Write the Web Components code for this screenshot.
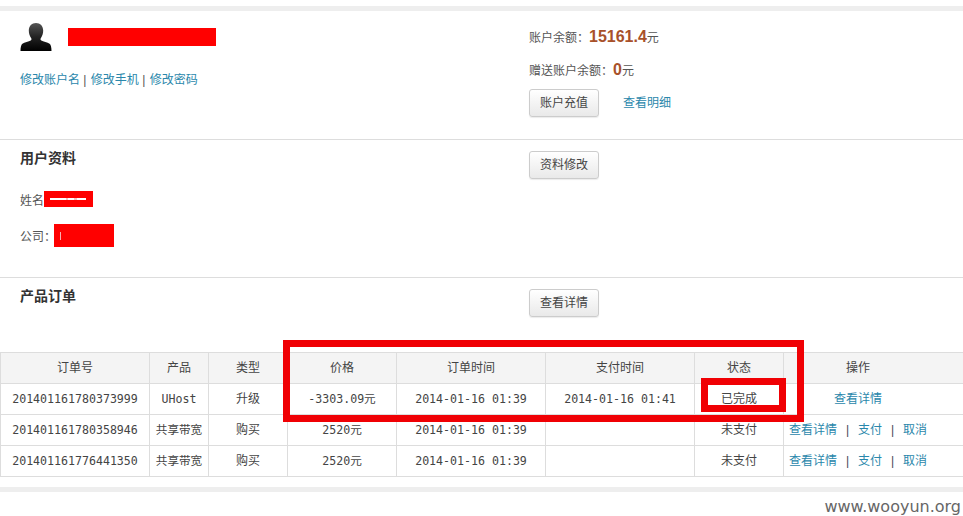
<!DOCTYPE html>
<html lang="zh">
<head>
<meta charset="utf-8">
<title>账户</title>
<style>
  html, body { margin: 0; padding: 0; background: #fff; }
  body {
    height: 516px;
    overflow: hidden;
    font: 12px/18px "Liberation Sans", "Noto Sans CJK SC", sans-serif;
    color: #444;
  }
</style>
</head>
<body>
<account-page></account-page>

<script>
const FONT = '"Liberation Sans", "Noto Sans CJK SC", sans-serif';
const LINK = '#2a87ab';

class RedactBar extends HTMLElement {
  connectedCallback() {
    this.attachShadow({ mode: 'open' });
    this.shadowRoot.innerHTML = `
      <style>
        :host { display: inline-block; background: #f00; vertical-align: top; position: relative; }
        .scratch { display: none; }
        :host([scratch]) .scratch {
          display: block;
          margin: 7px 7px 0 6px;
          height: 2px;
          background: linear-gradient(90deg, #fff 0 45%, #f9c0c0 45% 50%, #fff 50% 68%, #f9c0c0 68% 74%, #fff 74%);
        }
        :host([tick]) .tick {
          display: block;
          margin: 8px 0 0 6px;
          width: 1px;
          height: 8px;
          background: #f7b0b0;
        }
        .tick { display: none; }
      </style>
      <div class="scratch"></div><div class="tick"></div>
    `;
  }
}

class PlainButton extends HTMLElement {
  connectedCallback() {
    this.attachShadow({ mode: 'open' });
    this.shadowRoot.innerHTML = `
      <style>
        :host {
          display: block;
          box-sizing: border-box;
          width: 70px;
          height: 28px;
          border: 1px solid #ccc;
          border-radius: 3px;
          background: linear-gradient(#fff, #e9e9e9);
          box-shadow: 0 1px 1px rgba(0,0,0,0.08);
          color: #444;
          text-align: center;
          font: 12px/26px ${FONT};
        }
      </style>
      <slot></slot>
    `;
  }
}

class UserAvatar extends HTMLElement {
  connectedCallback() {
    this.attachShadow({ mode: 'open' });
    this.shadowRoot.innerHTML = `
      <style>
        :host { display: block; width: 32px; height: 30px; }
        svg { display: block; }
      </style>
      <svg width="32" height="30" viewBox="0 0 32 30">
        <defs>
          <linearGradient id="g" x1="0" y1="0" x2="0" y2="1">
            <stop offset="0" stop-color="#555"/>
            <stop offset="0.5" stop-color="#222"/>
            <stop offset="1" stop-color="#000"/>
          </linearGradient>
        </defs>
        <path fill="url(#g)" d="M16 1c4.300 0 7.200 3 7.200 7.500 0 3-1 5.800-2.400 7.700-.5.700-.4 1.700.5 2.200 1.800 1 6.300 1.800 8.300 3.400 1.300 1.100 1.900 3.600 1.900 7.200H.5c0-3.600.6-6.100 1.900-7.200 2-1.600 6.500-2.400 8.300-3.400.9-.5 1-1.500.5-2.200C9.800 14.300 8.800 11.500 8.800 8.500 8.800 4 11.700 1 16 1z"/>
      </svg>
    `;
  }
}

class RedFrame extends HTMLElement {
  connectedCallback() {
    this.attachShadow({ mode: 'open' });
    this.shadowRoot.innerHTML = `
      <style>
        :host {
          position: absolute;
          box-sizing: border-box;
          border: 7px solid #f00004;
          pointer-events: none;
        }
      </style>
    `;
  }
}

class AccountSummary extends HTMLElement {
  connectedCallback() {
    this.attachShadow({ mode: 'open' });
    this.shadowRoot.innerHTML = `
      <style>
        :host {
          display: grid;
          grid-template-columns: 529px 1fr;
          height: 128px;
          border-bottom: 1px solid #ddd;
          box-sizing: content-box;
        }
        .who { display: flex; gap: 16px; padding: 11px 0 0 20px; }
        .who redact-bar { width: 148px; height: 18px; margin-top: 6px; }
        .links { margin: 19px 0 0 20px; line-height: 18px; color: #555; }
        a { color: ${LINK}; text-decoration: none; }
        .links a + a { margin-left: 1px; }
        .right { padding-top: 16px; }
        .line { height: 20px; line-height: 20px; margin-bottom: 13px; color: #555; }
        .line b { font: bold 16px/20px ${FONT}; color: #a8512a; }
        .actions { display: flex; gap: 24px; align-items: center; margin-top: -4px; }
      </style>
      <div>
        <div class="who"><user-avatar></user-avatar><redact-bar></redact-bar></div>
        <div class="links"><a>修改账户名</a> | <a>修改手机</a> | <a>修改密码</a></div>
      </div>
      <div class="right">
        <div class="line">账户余额：<b>15161.4</b>元</div>
        <div class="line">赠送账户余额：<b>0</b>元</div>
        <div class="actions"><plain-button>账户充值</plain-button><a>查看明细</a></div>
      </div>
    `;
  }
}

class ProfileSection extends HTMLElement {
  connectedCallback() {
    this.attachShadow({ mode: 'open' });
    this.shadowRoot.innerHTML = `
      <style>
        :host {
          display: grid;
          grid-template-columns: 529px 1fr;
          height: 137px;
          border-bottom: 1px solid #ddd;
        }
        h3 { margin: 9px 0 0 20px; font: bold 14px/18px ${FONT}; color: #333; }
        .row { display: flex; margin-left: 20px; color: #555; }
        .name { margin-top: 24px; height: 16px; line-height: 20px; }
        .name redact-bar { width: 49px; height: 16px; }
        .company { margin-top: 17px; height: 23px; line-height: 26px; }
        .company redact-bar { width: 60px; height: 23px; margin-left: -2px; }
        .right { padding-top: 11px; }
      </style>
      <div>
        <h3>用户资料</h3>
        <div class="row name">姓名<redact-bar scratch></redact-bar></div>
        <div class="row company">公司：<redact-bar tick></redact-bar></div>
      </div>
      <div class="right"><plain-button>资料修改</plain-button></div>
    `;
  }
}

class OrderHead extends HTMLElement {
  connectedCallback() {
    this.attachShadow({ mode: 'open' });
    this.shadowRoot.innerHTML = `
      <style>
        :host {
          display: grid;
          grid-template-columns: 529px 1fr;
          height: 74px;
        }
        h3 { margin: 9px 0 0 20px; font: bold 14px/18px ${FONT}; color: #333; }
        .right { padding-top: 11px; }
      </style>
      <h3>产品订单</h3>
      <div class="right"><plain-button>查看详情</plain-button></div>
    `;
  }
}

const ORDERS = [
  ['201401161780373999', 'UHost', '升级', '-3303.09元', '2014-01-16 01:39', '2014-01-16 01:41', '已完成', 'single'],
  ['201401161780358946', '共享带宽', '购买', '2520元', '2014-01-16 01:39', '', '未支付', 'full'],
  ['201401161776441350', '共享带宽', '购买', '2520元', '2014-01-16 01:39', '', '未支付', 'full']
];

class OrderTable extends HTMLElement {
  connectedCallback() {
    this.attachShadow({ mode: 'open' });
    const rows = ORDERS.map(o => `
      <tr>
        <td class="num">${o[0]}</td>
        <td class="num">${o[1]}</td>
        <td>${o[2]}</td>
        <td class="num">${o[3]}</td>
        <td class="num">${o[4]}</td>
        <td class="num">${o[5]}</td>
        <td>${o[6]}</td>
        <td class="${o[7]}">${o[7] === 'single'
          ? '<a>查看详情</a>'
          : '<a>查看详情</a><i>|</i><a>支付</a><i>|</i><a>取消</a>'}</td>
      </tr>`).join('');
    this.shadowRoot.innerHTML = `
      <style>
        :host { display: block; position: relative; height: 125px; }
        table {
          border-collapse: collapse;
          table-layout: fixed;
          width: 964px;
          margin-left: 0;
          font: 12px/18px ${FONT};
          color: #444;
        }
        th, td {
          box-sizing: border-box;
          height: 31px;
          padding: 0;
          border: 1px solid #ddd;
          text-align: center;
          font-weight: normal;
          white-space: nowrap;
        }
        th { background: #f4f4f4; }
        .num { font-family: "DejaVu Sans Mono", "Noto Sans CJK SC", monospace; font-size: 11.6px; }
        a { color: ${LINK}; }
        i { display: inline-block; width: 21px; text-align: center; font-style: normal; color: #445; }
        th:last-child, td.single { padding-right: 32px; }
        td.full { text-align: left; padding-left: 5px; }
        .big { left: 283px; top: -12px; width: 521px; height: 82px; }
        .small { left: 701px; top: 26px; width: 85px; height: 34px; }
      </style>
      <table>
        <colgroup>
          <col style="width:149px"><col style="width:59px"><col style="width:79px">
          <col style="width:109px"><col style="width:149px"><col style="width:149px">
          <col style="width:89px"><col style="width:181px">
        </colgroup>
        <thead>
          <tr><th>订单号</th><th>产品</th><th>类型</th><th>价格</th><th>订单时间</th><th>支付时间</th><th>状态</th><th>操作</th></tr>
        </thead>
        <tbody>${rows}</tbody>
      </table>
      <red-frame class="big"></red-frame>
      <red-frame class="small"></red-frame>
    `;
  }
}

class AccountPage extends HTMLElement {
  connectedCallback() {
    this.attachShadow({ mode: 'open' });
    this.shadowRoot.innerHTML = `
      <style>
        :host { display: block; padding-top: 6px; }
        .band { height: 5px; background: #eee; }
        .foot { margin-top: 10px; }
        .mark {
          padding: 5px 2px 0 0;
          text-align: right;
          font: 16px/19px "DejaVu Sans", sans-serif;
          color: #666;
        }
      </style>
      <div class="band"></div>
      <account-summary></account-summary>
      <profile-section></profile-section>
      <order-head></order-head>
      <order-table></order-table>
      <div class="band foot"></div>
      <div class="mark">www.wooyun.org</div>
    `;
  }
}

customElements.define('redact-bar', RedactBar);
customElements.define('plain-button', PlainButton);
customElements.define('user-avatar', UserAvatar);
customElements.define('red-frame', RedFrame);
customElements.define('account-summary', AccountSummary);
customElements.define('profile-section', ProfileSection);
customElements.define('order-head', OrderHead);
customElements.define('order-table', OrderTable);
customElements.define('account-page', AccountPage);
</script>
</body>
</html>
